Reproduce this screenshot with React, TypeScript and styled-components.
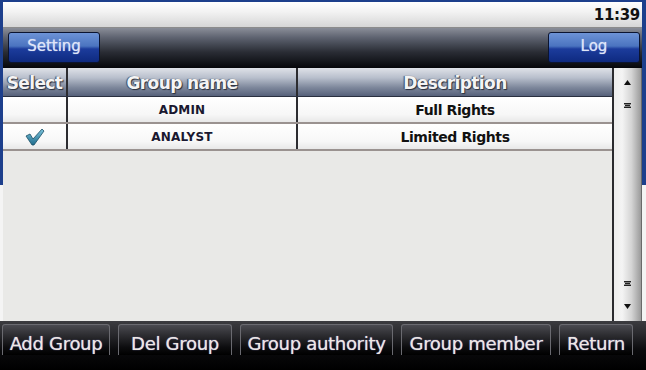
import React from 'react';
import styled, { createGlobalStyle } from 'styled-components';

const GlobalStyle = createGlobalStyle`
  html, body {
    margin: 0;
    padding: 0;
    background: #000;
  }
  body {
    font-family: 'DejaVu Sans', 'Liberation Sans', sans-serif;
  }
`;

const Screen = styled.div`
  width: 646px;
  height: 370px;
  box-sizing: border-box;
  padding: 2px 4px 0 3px;
  background: linear-gradient(to bottom, #1d3f8c 0, #1d3f8c 185px, #f4f4f4 185px, #f4f4f4 324px, #000 324px);
  display: flex;
  flex-direction: column;
  overflow: hidden;
`;

const StatusBar = styled.div`
  height: 26px;
  box-sizing: border-box;
  background: linear-gradient(to bottom, #ffffff, #f2f2f2 40%, #d6d6d6);
  border-bottom: 1px solid #8c8c8c;
  display: flex;
  align-items: center;
  justify-content: flex-end;
  padding-right: 2px;
`;

const Clock = styled.span`
  font-size: 15px;
  font-weight: bold;
  color: #111;
  letter-spacing: -0.3px;
`;

const NavBar = styled.div`
  height: 40px;
  box-sizing: border-box;
  background: linear-gradient(to bottom, #8a8e98 0, #5c616e 25%, #2a2d35 60%, #05060a 100%);
  display: flex;
  align-items: flex-start;
  justify-content: space-between;
  padding: 4px 2px 0 5px;
`;

const NavButton = styled.div`
  width: 92px;
  height: 31px;
  box-sizing: border-box;
  border: 1px solid #0b1430;
  border-radius: 3px;
  background: linear-gradient(to bottom, #6d93d6 0, #4b74c0 45%, #1c3c9c 55%, #0e2a80 100%);
  color: #dfe6f6;
  font-size: 15px;
  display: flex;
  align-items: center;
  justify-content: center;
  padding-bottom: 4px;
  text-shadow: 0 0 1px #c0c8ff;
`;

const Main = styled.div`
  flex: 1;
  display: flex;
  min-height: 0;
`;

const TableArea = styled.div`
  flex: 1;
  display: flex;
  flex-direction: column;
  background: #e9e9e7;
`;

const Row = styled.div<{ $head?: boolean }>`
  display: grid;
  grid-template-columns: 65px 230px 1fr;
  height: ${(p) => (p.$head ? '29px' : '27px')};
  box-sizing: border-box;
  border-bottom: ${(p) => (p.$head ? '1px solid #2a3040' : '2px solid #9a9290')};
  background: ${(p) =>
    p.$head
      ? 'linear-gradient(to bottom, #dfe2e8 0, #b8bfcc 35%, #7d879b 70%, #56617a 100%)'
      : 'linear-gradient(to bottom, #ffffff, #f7f7f7 70%, #e8e8e8)'};
`;

const Cell = styled.div<{ $head?: boolean; $last?: boolean; $caps?: boolean }>`
  display: flex;
  align-items: center;
  justify-content: center;
  overflow: hidden;
  white-space: nowrap;
  border-right: ${(p) => (p.$last ? 'none' : '2px solid #2c2c30')};
  font-size: ${(p) => (p.$head ? '17px' : p.$caps ? '12px' : '14px')};
  font-weight: bold;
  color: ${(p) => (p.$head ? '#f4f4f4' : p.$caps ? '#1a1830' : '#111')};
  text-shadow: ${(p) => (p.$head ? '1px 1px 1px #2a2f3c, -1px 0 1px #3a4050' : 'none')};
  letter-spacing: ${(p) => (p.$head ? '-0.6px' : p.$caps ? '0.2px' : '-0.4px')};
  padding-top: ${(p) => (p.$head ? '1px' : '0')};
`;

const Scrollbar = styled.div`
  width: 30px;
  box-sizing: border-box;
  border-left: 2px solid #2a2a2e;
  border-right: 1px solid #6a6a6a;
  background: linear-gradient(to right, #ededed 0, #f4f4f4 30%, #d4d4d4 65%, #9a9a9a 100%);
  display: flex;
  flex-direction: column;
  align-items: center;
  justify-content: space-between;
  padding: 12px 0 12px;
`;

const ScrollGroup = styled.div`
  display: flex;
  flex-direction: column;
  align-items: center;
  gap: 18px;
`;

const BottomBar = styled.div`
  height: 46px;
  margin: 0 -4px 0 -3px;
  background: linear-gradient(to bottom, #3c3c40 0, #2a2a2e 25%, #0a0a0c 60%, #000 100%);
  display: flex;
  align-items: flex-start;
  gap: 8px;
  padding: 3px 0 0 2px;
`;

const ActionButton = styled.div<{ $w: number }>`
  width: ${(p) => p.$w}px;
  height: 31px;
  box-sizing: border-box;
  border: 1px solid #6a6a70;
  border-bottom: none;
  border-radius: 3px 3px 0 0;
  background: linear-gradient(to bottom, #4a4a50 0, #2c2c30 35%, #0c0c0e 75%, #000 100%);
  color: #efe8e0;
  font-size: 18px;
  display: flex;
  align-items: flex-end;
  justify-content: center;
  white-space: nowrap;
  padding-bottom: 1px;
  letter-spacing: -0.3px;
  text-shadow: 0 0 1px #a0a0ff;
`;

const Check = () => (
  <svg width="20" height="18" viewBox="0 0 20 18">
    <defs>
      <linearGradient id="ck" x1="0" y1="0" x2="0" y2="1">
        <stop offset="0" stopColor="#7cc4dc" />
        <stop offset="1" stopColor="#1f6c8c" />
      </linearGradient>
    </defs>
    <path d="M1 8 L5 6 L8 11 L17 1 L19 3 L9 17 L7 17 Z" fill="url(#ck)" stroke="#1b4f66" strokeWidth="0.8" />
  </svg>
);

const Arrow = ({ up }: { up?: boolean }) => (
  <svg width="7" height="5" viewBox="0 0 7 5">
    <path d={up ? 'M0 5 L3.5 0 L7 5 Z' : 'M0 0 L7 0 L3.5 5 Z'} fill="#111" />
  </svg>
);

const Grip = () => (
  <svg width="7" height="5" viewBox="0 0 7 5">
    <rect x="0" y="0" width="7" height="1.4" fill="#222" />
    <rect x="1" y="1.8" width="5" height="1.4" fill="#222" />
    <rect x="0" y="3.6" width="7" height="1.4" fill="#222" />
  </svg>
);

const groups = [
  { name: 'ADMIN', desc: 'Full Rights', selected: false },
  { name: 'ANALYST', desc: 'Limited Rights', selected: true },
];

const actions = [
  { label: 'Add Group', w: 108 },
  { label: 'Del Group', w: 114 },
  { label: 'Group authority', w: 153 },
  { label: 'Group member', w: 150 },
  { label: 'Return', w: 74 },
];

const App: React.FC = () => {
  return (
    <>
      <GlobalStyle />
      <Screen>
        <StatusBar>
          <Clock>11:39</Clock>
        </StatusBar>
        <NavBar>
          <NavButton>Setting</NavButton>
          <NavButton>Log</NavButton>
        </NavBar>
        <Main>
          <TableArea>
            <Row $head>
              <Cell $head>Select</Cell>
              <Cell $head>Group name</Cell>
              <Cell $head $last>Description</Cell>
            </Row>
            {groups.map((g) => (
              <Row key={g.name}>
                <Cell>{g.selected && <Check />}</Cell>
                <Cell $caps>{g.name}</Cell>
                <Cell $last>{g.desc}</Cell>
              </Row>
            ))}
          </TableArea>
          <Scrollbar>
            <ScrollGroup>
              <Arrow up />
              <Grip />
            </ScrollGroup>
            <ScrollGroup>
              <Grip />
              <Arrow />
            </ScrollGroup>
          </Scrollbar>
        </Main>
        <BottomBar>
          {actions.map((a) => (
            <ActionButton key={a.label} $w={a.w}>
              {a.label}
            </ActionButton>
          ))}
        </BottomBar>
      </Screen>
    </>
  );
};

export default App;
